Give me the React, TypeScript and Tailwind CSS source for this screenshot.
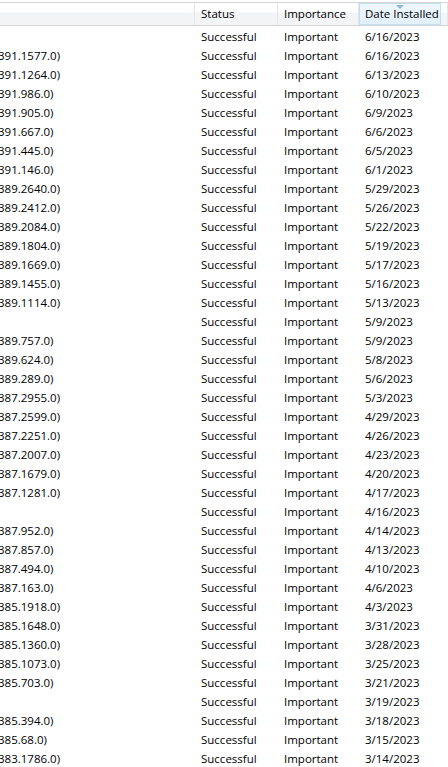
import React from 'react'

const rows: [string, string][] = [
  ['', '6/16/2023'],
  ['391.1577.0)', '6/16/2023'],
  ['391.1264.0)', '6/13/2023'],
  ['391.986.0)', '6/10/2023'],
  ['391.905.0)', '6/9/2023'],
  ['391.667.0)', '6/6/2023'],
  ['391.445.0)', '6/5/2023'],
  ['391.146.0)', '6/1/2023'],
  ['389.2640.0)', '5/29/2023'],
  ['389.2412.0)', '5/26/2023'],
  ['389.2084.0)', '5/22/2023'],
  ['389.1804.0)', '5/19/2023'],
  ['389.1669.0)', '5/17/2023'],
  ['389.1455.0)', '5/16/2023'],
  ['389.1114.0)', '5/13/2023'],
  ['', '5/9/2023'],
  ['389.757.0)', '5/9/2023'],
  ['389.624.0)', '5/8/2023'],
  ['389.289.0)', '5/6/2023'],
  ['387.2955.0)', '5/3/2023'],
  ['387.2599.0)', '4/29/2023'],
  ['387.2251.0)', '4/26/2023'],
  ['387.2007.0)', '4/23/2023'],
  ['387.1679.0)', '4/20/2023'],
  ['387.1281.0)', '4/17/2023'],
  ['', '4/16/2023'],
  ['387.952.0)', '4/14/2023'],
  ['387.857.0)', '4/13/2023'],
  ['387.494.0)', '4/10/2023'],
  ['387.163.0)', '4/6/2023'],
  ['385.1918.0)', '4/3/2023'],
  ['385.1648.0)', '3/31/2023'],
  ['385.1360.0)', '3/28/2023'],
  ['385.1073.0)', '3/25/2023'],
  ['385.703.0)', '3/21/2023'],
  ['', '3/19/2023'],
  ['385.394.0)', '3/18/2023'],
  ['385.68.0)', '3/15/2023'],
  ['383.1786.0)', '3/14/2023'],
]

const cols = 'grid grid-cols-[195px_83px_81px_82px_1fr]'

function HeaderCell({ label, sorted }: { label?: string; sorted?: boolean }) {
  if (sorted) {
    return (
      <div className="relative flex items-center overflow-hidden whitespace-nowrap border border-[#c2def2] bg-gradient-to-b from-[#eef7fd] to-[#e1f0fa] pl-[5px]">
        <svg className="absolute left-1/2 top-[1px] -translate-x-1/2" width="8" height="4" viewBox="0 0 8 4">
          <path d="M0 0 H8 L4 4 Z" fill="#8fb8d8" />
        </svg>
        {label}
      </div>
    )
  }
  return (
    <div className="flex items-center overflow-hidden whitespace-nowrap border-r border-[#e3e5e8] bg-[linear-gradient(#ffffff_0%,#ffffff_40%,#f3f4f6_45%,#f3f4f6_100%)] pl-[6px]">
      {label}
    </div>
  )
}

export default function App() {
  return (
    <div className="h-[767px] w-[448px] overflow-hidden bg-white text-[11.5px] text-black [font-family:'Open_Sans','Noto_Sans',sans-serif]">
      <div className="h-[2px]" />
      {/* column headers */}
      <div className={`${cols} h-[24px] border-y border-[#d5d5d5] leading-[16px]`}>
        <HeaderCell />
        <HeaderCell label="Status" />
        <HeaderCell label="Importance" />
        <HeaderCell label="Date Installed" sorted />
        <HeaderCell />
      </div>

      {/* rows */}
      <div className="pt-[1px]">
        {rows.map(([name, date], i) => (
          <div key={i} className={`${cols} h-[19px] items-center whitespace-nowrap leading-[19px]`}>
            <div className="overflow-hidden">
              <span className="-ml-[2px] inline-block">{name}</span>
            </div>
            <div className="pl-[6px]">Successful</div>
            <div className="pl-[6px]">Important</div>
            <div className="pl-[6px]">{date}</div>
            <div />
          </div>
        ))}
      </div>
    </div>
  )
}
